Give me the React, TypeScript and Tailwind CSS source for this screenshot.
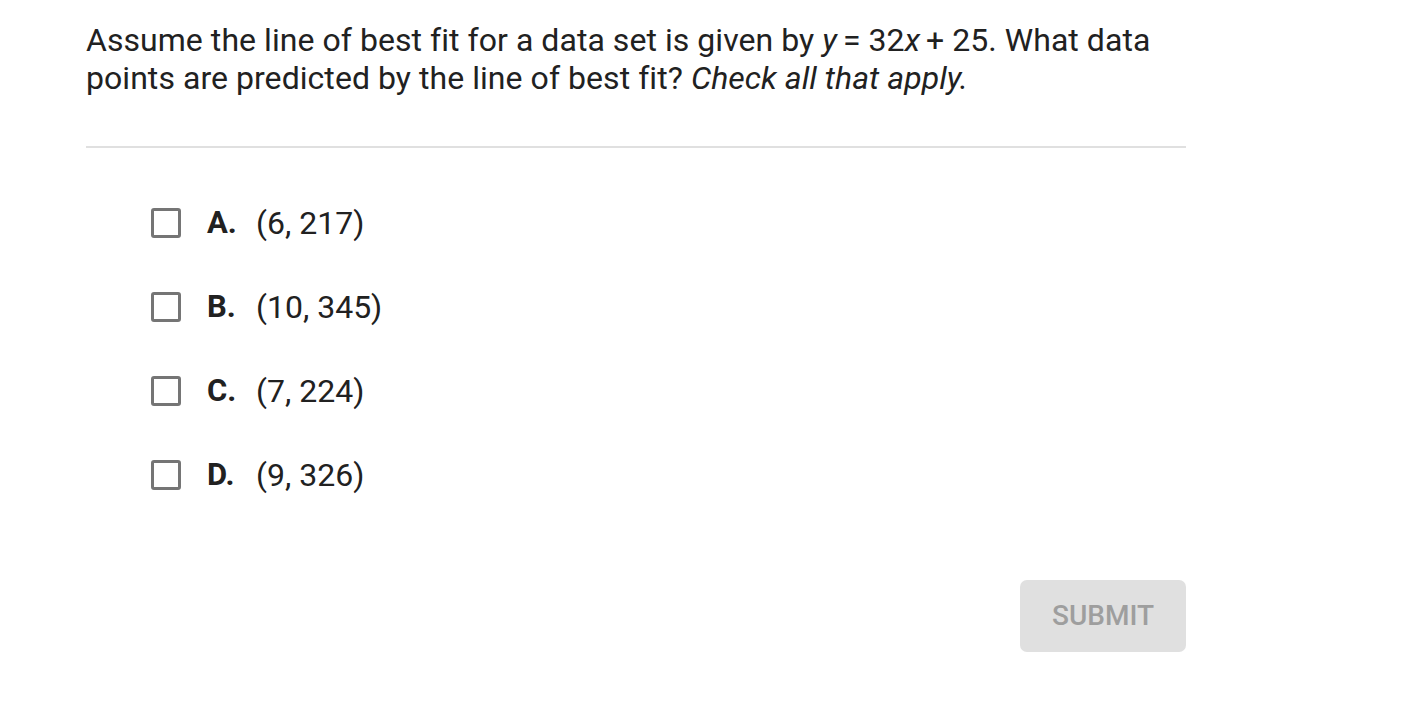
const options = [
  { key: "A", value: "(6, 217)" },
  { key: "B", value: "(10, 345)" },
  { key: "C", value: "(7, 224)" },
  { key: "D", value: "(9, 326)" },
];

export default function App() {
  return (
    <div
      className="w-[1410px] h-[712px] bg-white text-[#212121]"
      style={{ fontFamily: "Roboto, 'Liberation Sans', sans-serif" }}
    >
      <div className="ml-[86px] w-[1100px] pt-[21px]">
        <p className="text-[32px] leading-[38px] tracking-[0.05px]">
          Assume the line of best fit for a data set is given by <i>y</i>
          <span className="tracking-[-2px]"> </span>= 32<i>x</i>
          <span className="tracking-[-2px]"> </span>+ 25. What data
          <br />
          points are predicted by the line of best fit? <i>Check all that apply.</i>
        </p>

        <div className="mt-[49px] h-[2px] bg-[#e0e0e0]" />

        <ul className="mt-[58px] ml-[65px] flex flex-col gap-[50px]">
          {options.map((o) => (
            <li key={o.key} className="flex items-center h-[34px]">
              <span className="w-[30px] h-[30px] rounded-[3px] border-[3px] border-[#757575] bg-white" />
              <span className="ml-[26px] w-[49px] text-[31px] font-bold">{o.key}.</span>
              <span className="text-[32px]">{o.value}</span>
            </li>
          ))}
        </ul>

        <div className="mt-[88px] flex justify-end">
          <button className="w-[166px] h-[72px] rounded-[7px] bg-[#e0e0e0] text-[#9e9e9e] text-[28px] font-medium">
            SUBMIT
          </button>
        </div>
      </div>
    </div>
  );
}
